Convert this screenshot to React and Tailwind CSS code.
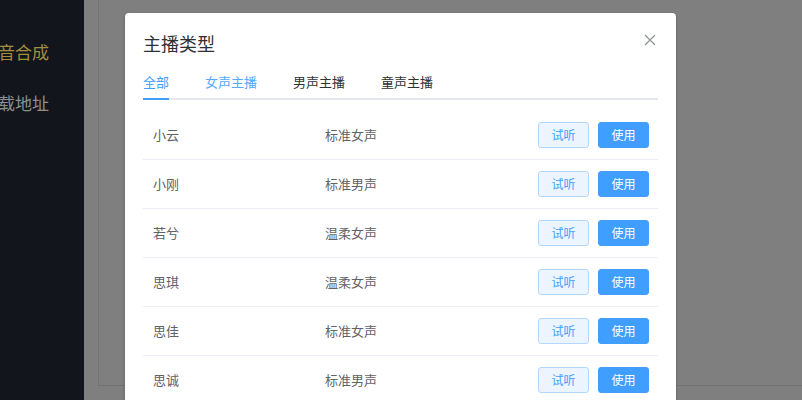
import React from 'react'

const tabs = ['全部', '女声主播', '男声主播', '童声主播']

const anchors = [
  { name: '小云', type: '标准女声' },
  { name: '小刚', type: '标准男声' },
  { name: '若兮', type: '温柔女声' },
  { name: '思琪', type: '温柔女声' },
  { name: '思佳', type: '标准女声' },
  { name: '思诚', type: '标准男声' },
]

const font = { fontFamily: '"Noto Sans CJK SC", "Noto Sans", sans-serif' }

export default function App() {
  return (
    <div className="relative flex h-[400px] w-[802px] overflow-hidden" style={font}>
      {/* sidebar (under mask) */}
      <div className="w-[84px] shrink-0 overflow-hidden bg-[#12151c]">
        <div className="mt-[40px] ml-[-19px] whitespace-nowrap text-[17px] leading-[24px] text-[#a58f3f]">语音合成</div>
        <div className="mt-[27px] ml-[-19px] whitespace-nowrap text-[17px] leading-[24px] text-[#8d8f93]">下载地址</div>
      </div>

      {/* main area (under mask) */}
      <div className="flex-1 bg-[#7f7f7f] pl-[14px] pb-[14px]">
        <div className="h-full border-l border-b border-[#737373]" />
      </div>

      {/* dialog */}
      <div className="absolute left-[125px] top-[13px] w-[551px] h-[420px] rounded-sm bg-white shadow-[0_1px_3px_rgba(0,0,0,0.3)]">
        <div className="flex items-center justify-between pl-[18px] pr-[20px] pt-[18px]">
          <span className="text-[18px] leading-[24px] text-[#303133]">主播类型</span>
          <svg width="12" height="12" viewBox="0 0 12 12" className="-mt-[6px]">
            <path d="M1 1L11 11M11 1L1 11" stroke="#909399" strokeWidth="1.2" />
          </svg>
        </div>

        <div className="mx-[18px] mt-[17px]">
          <div className="relative flex h-[28px] items-start border-b-2 border-[#e4e7ed]">
            {tabs.map((t, i) => (
              <div
                key={t}
                className={
                  'mr-[36px] text-[13px] leading-[20px] ' +
                  (i === 0 ? 'text-[#409eff]' : i === 1 ? 'text-[#53a8ff]' : 'text-[#303133]')
                }
              >
                {t}
              </div>
            ))}
            <div className="absolute left-0 bottom-[-2px] h-[2px] w-[26px] bg-[#409eff]" />
          </div>

          <div className="mt-[11px]">
            {anchors.map((a) => (
              <div key={a.name} className="flex h-[49px] items-center border-b border-[#ebeef5] text-[13px] text-[#606266]">
                <span className="w-[182px] pl-[10px]">{a.name}</span>
                <span className="flex-1">{a.type}</span>
                <div className="flex gap-[9px] pr-[9px]">
                  <button className="h-[26px] w-[51px] rounded-[3px] border border-[#b3d8ff] bg-[#ecf5ff] text-[12px] text-[#409eff]">试听</button>
                  <button className="h-[26px] w-[51px] rounded-[3px] border border-[#409eff] bg-[#409eff] text-[12px] text-white">使用</button>
                </div>
              </div>
            ))}
          </div>
        </div>
      </div>
    </div>
  )
}
